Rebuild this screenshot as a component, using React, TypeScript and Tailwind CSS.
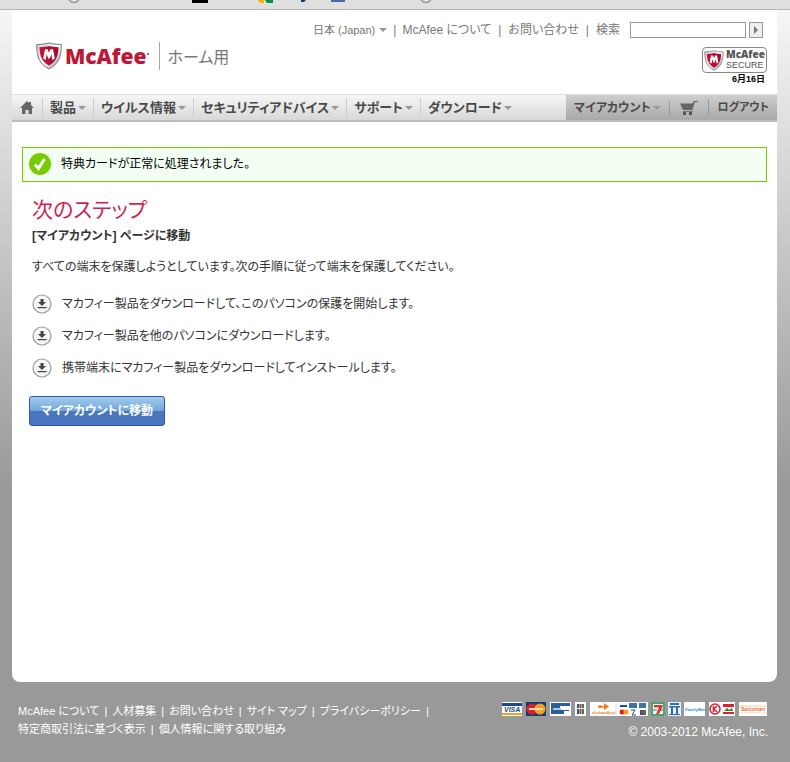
import React from 'react';

const Shield = ({ className }: { className: string }) => (
  <svg viewBox="0 0 26 28" className={className} aria-hidden="true">
    <defs>
      <linearGradient id="rim" x1="0" x2="1" y1="0" y2="1">
        <stop offset="0" stopColor="#c3c9cc" />
        <stop offset=".5" stopColor="#ffffff" />
        <stop offset="1" stopColor="#7c868a" />
      </linearGradient>
      <linearGradient id="red" x1="0" x2="1">
        <stop offset="0" stopColor="#d0103a" />
        <stop offset="1" stopColor="#9d0d2b" />
      </linearGradient>
    </defs>
    <path d="M.7 2.500C5 2.500 9 2 13 1c4 1 8 1.500 12.300 1.500C25.300 14 23 22 13 27 3 22 .7 14 .7 2.500z" fill="url(#rim)" stroke="#737c80" />
    <path d="M3.500 5.200c3.500 0 6.500-.5 9.500-1.200 3 .7 6 1.200 9.500 1.200-.2 9-2.500 14.300-9.500 18.300-7-4-9.300-9.300-9.500-18.300z" fill="url(#red)" />
    <path d="M7.200 16.500L9 7.300h2.700L13 11l1.300-3.700H17l1.800 9.200-2.600 1.500-.8-6-1.600 4.500h-1.600L10.600 12l-.8 6z" fill="#fff" />
  </svg>
);

const Caret = () => (
  <svg viewBox="0 0 8 4" className="h-1 w-2 shrink-0" aria-hidden="true">
    <path d="M0 0h8L4 4z" fill="#999" />
  </svg>
);

const menu = ['製品', 'ウイルス情報', 'セキュリティアドバイス', 'サポート', 'ダウンロード'];

const steps = [
  'マカフィー製品をダウンロードして、このパソコンの保護を開始します。',
  'マカフィー製品を他のパソコンにダウンロードします。',
  '携帯端末にマカフィー製品をダウンロードしてインストールします。',
];

const footerRows = [
  ['McAfee について', '人材募集', 'お問い合わせ', 'サイト マップ', 'プライバシーポリシー', ''],
  ['特定商取引法に基づく表示', '個人情報に関する取り組み'],
];

const BrowserStrip = () => (
  <div className="h-[10px] border-b border-[#b5b5b9] bg-[#dfdfdf]">
    <svg width="440" height="9" className="block" aria-hidden="true">
      <circle cx="74" cy="-3" r="5.500" fill="#e8e8e8" stroke="#999" strokeWidth="1.500" />
      <path d="M192 0h16v3h-16z" fill="#000" />
      <path d="M258 0h6v3h-4z" fill="#f5b400" />
      <path d="M265 0h8v3h-6z" fill="#0a8f3c" />
      <path d="M301 0h5l-2 2h-3z" fill="#123a7a" />
      <path d="M331 0h14v2h-14z" fill="#4a67a8" />
      <circle cx="426" cy="-3" r="5.500" fill="#e8e8e8" stroke="#999" strokeWidth="1.500" />
    </svg>
  </div>
);

const Header = () => (
  <header className="flex h-[84px] justify-between">
    <a href="#" className="mt-8 ml-6 flex h-7 items-center">
      <Shield className="h-7 w-[26px]" />
      <span className="ml-[3px] font-['Open_Sans'] text-[21px] leading-7 font-extrabold text-[#bd1839]">McAfee</span>
      <svg viewBox="0 0 2 2" className="mb-1 size-0.5" aria-hidden="true"><circle cx="1" cy="1" r="1" fill="#bd1839" /></svg>
      <span className="ml-2.5 flex h-7 items-center border-l border-[#aaa] pt-1 pl-2 text-base text-[#777]">ホーム用</span>
    </a>
    <div className="flex flex-col items-end pr-2.5">
      <form className="mt-3 mr-1 flex h-4 items-center text-xs text-[#777]" onSubmit={(e) => e.preventDefault()}>
        <a href="#" className="flex items-center gap-1 text-[11px]">日本 (Japan) <Caret /></a>
        <span className="mx-1.5">|</span>
        <a href="#">McAfee について</a>
        <span className="mx-[7px]">|</span>
        <a href="#">お問い合わせ</a>
        <span className="mx-[7px]">|</span>
        <label htmlFor="search">検索</label>
        <input id="search" className="ml-2.5 h-4 w-[116px] border border-[#999] bg-white px-1" />
        <button aria-label="検索" className="ml-[3px] flex h-4 w-[14px] items-center justify-center border border-[#999] bg-[#eee]">
          <svg viewBox="0 0 4 8" className="h-2 w-1"><path d="M0 0l4 4-4 4z" fill="#777" /></svg>
        </button>
      </form>
      <a href="#" className="mt-[9px] flex h-[26px] w-[65px] items-center rounded-[4px] border border-[#888] pl-px">
        <Shield className="h-[21px] w-5 shrink-0" />
        <span className="ml-0.5 flex flex-col leading-[11px] text-[#555]">
          <span className="font-['Open_Sans'] text-[10px] font-extrabold">McAfee</span>
          <span className="text-[9px]">SECURE</span>
        </span>
      </a>
      <p className="mr-0.5 text-[9px] leading-3 font-bold text-black">6月16日</p>
    </div>
  </header>
);

const Nav = () => (
  <nav className="flex h-7 justify-between border-t border-b-2 border-t-[#e0e0e0] border-b-[#bbb] bg-linear-to-b from-[#f6f6f6] to-[#d8d8d8] text-[13px] font-bold text-[#4a4a4a]">
    <div className="flex items-center">
      <a href="#" aria-label="ホーム" className="ml-2 pr-2">
        <svg viewBox="0 0 14 13" className="h-[13px] w-[14px]"><path d="M7 0l2 2V1h2v3l3 3h-2v6H8.500V9h-3v4H2V7H0z" fill="#666" /></svg>
      </a>
      {menu.map((item) => (
        <a key={item} href="#" className="flex h-5 items-center gap-0.5 border-l border-[#ccc] pr-[7px] pl-[7px] whitespace-nowrap">{item}<Caret /></a>
      ))}
    </div>
    <div className="flex items-center bg-linear-to-b from-[#cecece] to-[#a8a8a8] px-2">
      <a href="#" className="flex items-center gap-[3px] pr-2 text-xs">マイアカウント<Caret /></a>
      <a href="#" aria-label="カート" className="border-l border-[#999] px-2.5">
        <svg viewBox="0 0 18 14" className="h-[14px] w-[18px]"><path d="M0 2.500h12.500L14 0h4v1h-3l-2.800 8H3z" fill="#666" /><path d="M3 10h10v1H3z" fill="#777" /><path d="M3 11h3v3H3zM9 11h3v3H9z" fill="#555" /></svg>
      </a>
      <a href="#" className="border-l border-[#999] pl-2 text-[11px]">ログアウト</a>
    </div>
  </nav>
);

const Cards = () => (
  <svg width="266" height="14" viewBox="0 0 266 14" role="img" aria-label="お支払い方法">
    <path d="M0 0h20v14H0zM48 0h21v14H48zM73 0h11v14H73zM88 0h58v14H88zM149 0h14v14h-14zM166 0h13v14h-13zM182 0h21v14h-21zM207 0h26v14h-26zM237 0h28v14h-28z" fill="#fff" />
    <path d="M0 1h20v3H0z" fill="#194a91" />
    <path d="M0 11h20v2H0z" fill="#f5a21b" />
    <text x="2" y="10" fontSize="7" fontWeight="bold" fontStyle="italic" fill="#194a91">VISA</text>
    <path d="M24 0h20v14H24z" fill="#153b78" />
    <circle cx="30" cy="7" r="5.500" fill="#dc1f26" />
    <circle cx="38" cy="7" r="5.500" fill="#f7a01d" />
    <path d="M27 6h14v2H27z" fill="#f7d9c0" />
    <path d="M49 1h19v3H58v4h9v1h-5v3H49z" fill="#2b5f9c" />
    <path d="M51 6h8v2h-8z" fill="#a9c6e0" />
    <path d="M75 2h2v10h-2z" fill="#1660a9" />
    <path d="M77.500 2h2v10h-2z" fill="#d9232e" />
    <path d="M80 2h2v10h-2z" fill="#14934a" />
    <path d="M74 6h9v1h-9z" fill="#fff" />
    <path d="M96 4h6V1l5 3.500L102 8V5.500h-6z" fill="#f47b20" />
    <circle cx="98" cy="4.500" r="1.500" fill="#f47b20" />
    <text x="90" y="12" fontSize="4" fontWeight="bold" fill="#f47b20">clickandbuy</text>
    <path d="M114 1v12" stroke="#ddd" />
    <path d="M118 3h7v2h-7z" fill="#194a91" />
    <path d="M127 1h8v5h-8zM137 1h7v5h-7z" fill="#3d74a8" />
    <circle cx="120" cy="10" r="2.500" fill="#dc1f26" />
    <circle cx="124" cy="10" r="2.500" fill="#f7a01d" />
    <path d="M129 8h4l-3 5h4" stroke="#234b82" fill="none" />
    <path d="M138 8h2v5h-2z" fill="#1660a9" />
    <path d="M140 8h2v5h-2z" fill="#d9232e" />
    <path d="M142 8h2v5h-2z" fill="#14934a" />
    <path d="M150 1h12v12h-12z" fill="#fff" stroke="#17834a" strokeWidth="1.500" />
    <path d="M152 3h8.500v2L157 12h-3l3-6.500h-5z" fill="#e3342b" />
    <path d="M151 7.500h4v1h-4zM158 7.500h3v1h-3z" fill="#17834a" />
    <path d="M166 0h13v14h-13z" fill="#e9f2fb" />
    <path d="M168 1h9v2h-9zM167 4h11v1.500h-11zM169 5h2v7h-2zM174 5h2v7h-2zM167 12h11v1h-11z" fill="#2b6db5" />
    <text x="183" y="9" fontSize="4" fontWeight="bold" fill="#2a8fd0">FamilyMart</text>
    <circle cx="213" cy="7" r="5" fill="#fff" stroke="#dd1f2d" strokeWidth="1.500" />
    <path d="M211.500 4v6M215 4l-3 3 3 3" stroke="#dd1f2d" strokeWidth="1.500" fill="none" />
    <path d="M221 2h11v3h-11zM221 10h11v2h-11z" fill="#dd1f2d" />
    <path d="M222 9l3-3 2 2 3-2 1 3z" fill="#397b3a" />
    <path d="M237 3h28v2h-28zM237 10h28v1h-28z" fill="#fde5cf" />
    <text x="239" y="9" fontSize="5" fontWeight="bold" fill="#ef6c1b">Seicomart</text>
  </svg>
);

export default function App() {
  return (
    <div className="flex min-h-screen flex-col bg-[#999] bg-linear-to-b from-[#f8f8f8] to-[#999] to-[490px] font-['Liberation_Sans','Noto_Sans_CJK_JP',sans-serif] [font-feature-settings:'palt']">
      <BrowserStrip />
      <div className="mr-[13px] ml-3 flex grow flex-col rounded-b-lg bg-white">
        <Header />
        <Nav />
        <main className="px-2.5 pt-[25px] pb-60 text-xs text-[#333]">
          <div role="status" className="flex h-[35px] items-center gap-2.5 border border-[#77cc00] bg-[#f4fff4] px-1.5 pb-px text-black">
            <svg viewBox="0 0 22 22" className="size-[22px]"><circle cx="11" cy="11" r="11" fill="#77cc00" /><path d="M6 11.500l3.500 4 6-9.500" fill="none" stroke="#fff" strokeWidth="3" /></svg>
            特典カードが正常に処理されました。
          </div>
          <div className="pl-2.5">
            <h1 className="mt-3.5 text-[21px] leading-7 text-[#cf1f55]">次のステップ</h1>
            <h2 className="mt-0.5 leading-5 font-bold">[マイアカウント] ページに移動</h2>
            <p className="mt-3 leading-[18px]">すべての端末を保護しようとしています。次の手順に従って端末を保護してください。</p>
            <ul className="mt-[18px] space-y-3">
              {steps.map((step) => (
                <li key={step} className="flex h-5 items-center gap-2.5">
                  <svg viewBox="0 0 20 20" className="size-5"><circle cx="10" cy="10" r="9" fill="#f5f5f5" stroke="#999" strokeWidth="1.200" /><path d="M8.500 5h3v3H14l-4 4-4-4h2.500zM5.500 13h9v1.300h-9z" fill="#444" /></svg>
                  {step}
                </li>
              ))}
            </ul>
          </div>
          <button className="mt-[18px] ml-[7px] h-[30px] w-[136px] rounded-[3px] border border-[#2856b2] bg-linear-to-b from-[#a5cbea] from-0% via-[#6fa6d9] via-50% to-[#4a76bd] to-50% font-bold text-white">マイアカウントに移動</button>
        </main>
      </div>
      <footer className="flex h-20 justify-between bg-[#999] pt-5 pr-[22px] pl-[18px] text-[11px] text-white">
        <div>
          {footerRows.map((row, i) => (
            <div key={i} className="flex h-[18px] items-center">
              {row.map((text, j) => (
                <React.Fragment key={j}>
                  {j > 0 && <span className="mx-[5px]">|</span>}
                  {text && <a href="#">{text}</a>}
                </React.Fragment>
              ))}
            </div>
          ))}
        </div>
        <div className="flex flex-col items-end">
          <Cards />
          <p className="mt-2 text-xs">© 2003-2012 McAfee, Inc.</p>
        </div>
      </footer>
    </div>
  );
}
